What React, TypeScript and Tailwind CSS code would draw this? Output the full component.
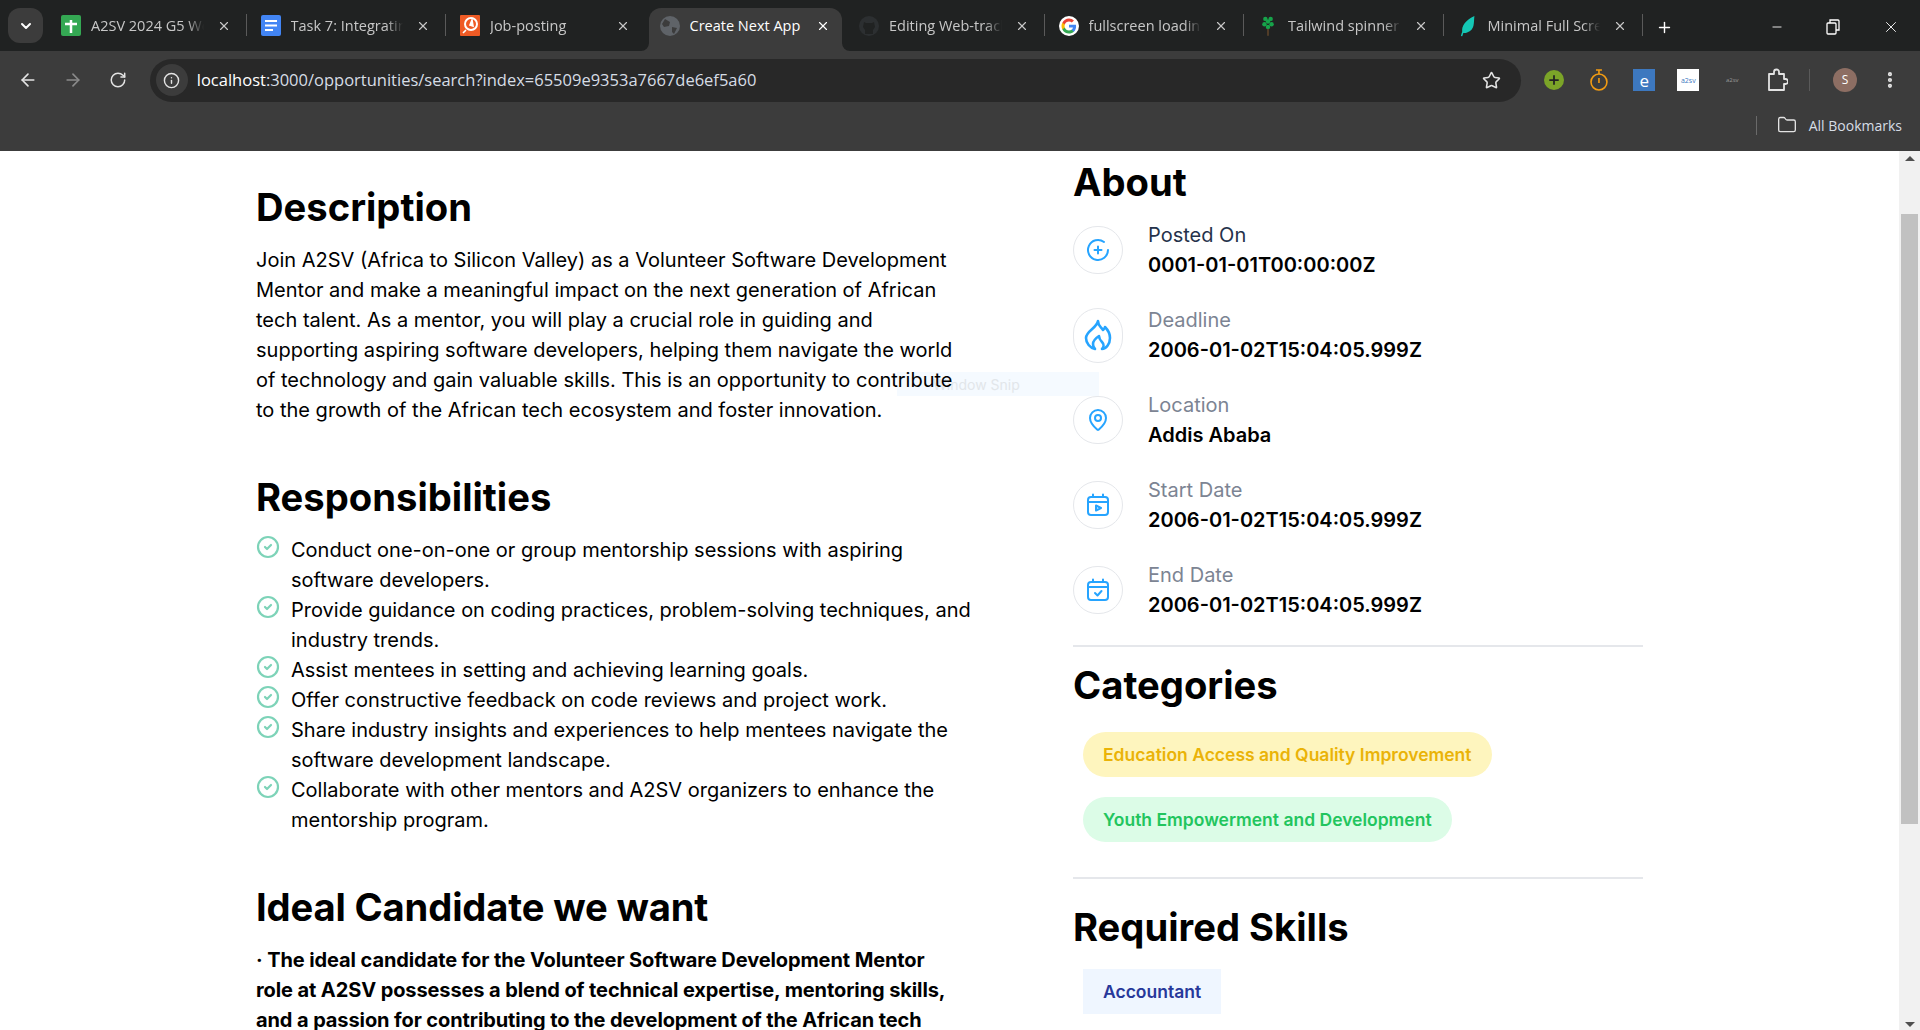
import { ArrowLeft, ArrowRight, ChevronDown, Ellipsis, Folder, Info, MapPin, Minus, Plus, RotateCw, Star, X, CheckCircle2 } from "lucide-react";
import type { ReactNode } from "react";

const SheetsIcon = () => (
  <svg width="20" height="21" viewBox="0 0 20 21"><rect width="20" height="21" rx="2" fill="#34a853" /><path d="M10 5v13M4 9h12" stroke="#fff" strokeWidth="2.5" /></svg>
);
const DocsIcon = () => (
  <svg width="20" height="21" viewBox="0 0 20 21"><rect width="20" height="21" rx="2" fill="#4285f4" /><path d="M4 6h12M4 10.500h12M4 15h8" stroke="#fff" strokeWidth="2.2" /></svg>
);
const PostmanIcon = () => (
  <svg width="20" height="21" viewBox="0 0 20 21"><rect width="20" height="21" rx="1" fill="#ef5b25" /><circle cx="11" cy="9" r="6" fill="none" stroke="#fff" strokeWidth="2" /><path d="M12 5l-2 5 3 1zM3 18l3-3" stroke="#fff" strokeWidth="1.6" fill="#fff" /></svg>
);
const GlobeIcon = () => (
  <svg width="20" height="20" viewBox="0 0 20 20"><circle cx="10" cy="10" r="10" fill="#5f6368" /><path d="M5 3l5 3-1 4-5 1-2-3zM12 11l5 1-3 6-2-2z" fill="#3c3c3c" /></svg>
);
const GithubIcon = () => (
  <svg width="20" height="20" viewBox="0 0 20 20"><circle cx="10" cy="10" r="10" fill="#2c2f31" /><path d="M6 18v-4l-2-3 1-5 2 1h6l2-1 1 5-2 3v4z" fill="#202222" /></svg>
);
const GoogleIcon = () => (
  <svg width="20" height="20" viewBox="0 0 48 48">
    <circle cx="24" cy="24" r="24" fill="#fff" />
    <path fill="#4285f4" d="M41 24.500c0-1.300-.1-2.500-.3-3.700H24v7h9.600c-.4 2.200-1.700 4.100-3.500 5.300v4.500h5.700C39.100 34.500 41 30 41 24.500z" />
    <path fill="#34a853" d="M24 42c4.800 0 8.800-1.600 11.800-4.300l-5.700-4.500c-1.600 1.100-3.600 1.700-6.100 1.700-4.700 0-8.600-3.100-10-7.400H8.100v4.600C11 37.900 17 42 24 42z" />
    <path fill="#fbbc05" d="M14 27.500c-.4-1.100-.6-2.300-.6-3.500s.2-2.400.6-3.500v-4.600H8.100C6.800 18.300 6 21 6 24s.8 5.700 2.100 8.100z" />
    <path fill="#ea4335" d="M24 13.100c2.600 0 5 .9 6.800 2.700l5.100-5.100C32.800 7.800 28.800 6 24 6 17 6 11 10.100 8.100 15.900l5.900 4.600c1.400-4.300 5.300-7.400 10-7.400z" />
  </svg>
);
const TreeIcon = () => (
  <svg width="16" height="22" viewBox="0 0 18 24"><path d="M9 12v11" stroke="#6b4a2b" strokeWidth="1.5" /><g fill="#16a34a"><circle cx="6" cy="4" r="2.500" /><circle cx="12" cy="4" r="2.500" /><circle cx="5" cy="10" r="2.500" /><circle cx="13" cy="10" r="2.500" /><circle cx="9" cy="7" r="2.500" /><circle cx="9" cy="13" r="2.500" /></g></svg>
);
const LeafIcon = () => (
  <svg width="18" height="22" viewBox="0 0 18 24"><path d="M16 1C15 8 17 16 8 19c-2 1-4 1-5 0C1 12 7 5 16 1z" fill="#14c7b5" /><path d="M2 23c1-5 4-9 8-12" stroke="#14c7b5" strokeWidth="1.500" fill="none" /></svg>
);

const tabs: { title: string; icon: ReactNode; active?: boolean }[] = [
  { title: "A2SV 2024 G5 Weekly", icon: <SheetsIcon /> },
  { title: "Task 7: Integrating", icon: <DocsIcon /> },
  { title: "Job-posting", icon: <PostmanIcon /> },
  { title: "Create Next App", icon: <GlobeIcon />, active: true },
  { title: "Editing Web-track", icon: <GithubIcon /> },
  { title: "fullscreen loading", icon: <GoogleIcon /> },
  { title: "Tailwind spinner", icon: <TreeIcon /> },
  { title: "Minimal Full Screen", icon: <LeafIcon /> },
];

const PostedIcon = () => (
  <svg width="24" height="24" viewBox="0 0 24 24" fill="none" stroke="#26a4ff" strokeWidth="2" strokeLinecap="round">
    <path d="M22 12a10 10 0 1 1-4-8" />
    <path d="M12 8.500v7M8.500 12h7" />
  </svg>
);
const FlameIcon = () => (
  <svg width="28" height="32" viewBox="0 0 28 32" fill="none" stroke="#26a4ff" strokeWidth="2.600" strokeLinecap="round" strokeLinejoin="round">
    <path d="M14 2c0 5 3 6 5 9 1-1 2-2 2-3 3 3 5 7 5 11 0 6-4 11-8 11 2-2 2-5 0-7-1-1-3-3-3-6-3 2-6 5-6 8 0 2 1 4 2 5-5-1-9-6-9-11 0-7 11-10 12-17z" />
  </svg>
);
const StartIcon = () => (
  <svg width="24" height="24" viewBox="0 0 24 24" fill="none" stroke="#26a4ff" strokeWidth="2" strokeLinecap="round" strokeLinejoin="round">
    <rect x="2" y="4" width="20" height="18" rx="3" />
    <path d="M2 9h20M7 1.500V4M17 1.500V4" />
    <path d="M10 12.500l5 2.500-5 2.500z" />
  </svg>
);
const EndIcon = () => (
  <svg width="24" height="24" viewBox="0 0 24 24" fill="none" stroke="#26a4ff" strokeWidth="2" strokeLinecap="round" strokeLinejoin="round">
    <rect x="2" y="4" width="20" height="18" rx="3" />
    <path d="M2 9h20M7 1.500V4M17 1.500V4" />
    <path d="M9 15l2.500 2.500L15.500 13" />
  </svg>
);
const ExtensionsIcon = () => (
  <svg width="22" height="24" viewBox="0 0 22 24" fill="none" stroke="#e3e3e3" strokeWidth="1.800" strokeLinejoin="round">
    <path d="M3 6h5V4a2.500 2.500 0 0 1 5 0v2h5v5h1.500a2.500 2.500 0 0 1 0 5H18v6H3z" />
  </svg>
);

const aboutRows: { label: string; value: string; icon: ReactNode; circle: string; labelColor: string }[] = [
  { label: "Posted On", value: "0001-01-01T00:00:00Z", icon: <PostedIcon />, circle: "h-12", labelColor: "text-[#25324b]" },
  { label: "Deadline", value: "2006-01-02T15:04:05.999Z", icon: <FlameIcon />, circle: "h-[55px]", labelColor: "text-[#7c8493]" },
  { label: "Location", value: "Addis Ababa", icon: <MapPin size={24} color="#26a4ff" strokeWidth={2} />, circle: "h-12", labelColor: "text-[#7c8493]" },
  { label: "Start Date", value: "2006-01-02T15:04:05.999Z", icon: <StartIcon />, circle: "h-12", labelColor: "text-[#7c8493]" },
  { label: "End Date", value: "2006-01-02T15:04:05.999Z", icon: <EndIcon />, circle: "h-12", labelColor: "text-[#7c8493]" },
];

const responsibilities = [
  "Conduct one-on-one or group mentorship sessions with aspiring software developers.",
  "Provide guidance on coding practices, problem-solving techniques, and industry trends.",
  "Assist mentees in setting and achieving learning goals.",
  "Offer constructive feedback on code reviews and project work.",
  "Share industry insights and experiences to help mentees navigate the software development landscape.",
  "Collaborate with other mentors and A2SV organizers to enhance the mentorship program.",
];

function BrowserChrome() {
  return (
    <div className="h-[151px] shrink-0 bg-[#3c3c3c] font-['Open_Sans',sans-serif] text-[#c7c7c7]">
      <div className="flex h-[51px] items-end bg-[#202222] pl-2">
        <div className="mb-2 flex h-[35px] w-[35px] items-center justify-center rounded-xl bg-[#3c3c3c] text-white">
          <ChevronDown size={16} strokeWidth={3} />
        </div>
        <div className="ml-[4px] flex">
          {tabs.map((tab, i) => (
            <div key={tab.title} className={`relative flex h-[43px] items-center pb-2 ${tab.active ? "mx-[3px] w-[193.500px] rounded-t-xl bg-[#3c3c3c] pl-[9px] pr-3 text-white" : "w-[199.500px] pl-3 pr-4"}`}>
              <div className="flex w-6 shrink-0 justify-center">{tab.icon}</div>
              <span className={`ml-[8px] flex-1 overflow-hidden whitespace-nowrap text-[14.500px] ${tab.active ? "" : "[mask-image:linear-gradient(to_right,black_85%,transparent)]"}`}>{tab.title}</span>
              <X size={14} strokeWidth={2} className={`shrink-0 ${tab.active ? "ml-2" : "ml-[13px]"}`} />
              {i !== 2 && i !== 3 && <span className="absolute right-0 top-[6px] h-[22px] w-px bg-[#5a5a5a]" />}
              {tab.active && (
                <>
                  <svg className="absolute bottom-0 -left-2" width="8" height="8" viewBox="0 0 8 8"><path d="M8 0v8H0a8 8 0 0 0 8-8z" fill="#3c3c3c" /></svg>
                  <svg className="absolute bottom-0 -right-2" width="8" height="8" viewBox="0 0 8 8"><path d="M0 0v8h8a8 8 0 0 1-8-8z" fill="#3c3c3c" /></svg>
                </>
              )}
            </div>
          ))}
        </div>
        <Plus size={17} strokeWidth={2} className="mb-[15px] ml-[13px] text-white" />
        <div className="mb-[15px] ml-auto flex items-center gap-[42px] pr-[20px] text-white">
          <Minus size={14} strokeWidth={1.500} />
          <svg width="14" height="16" viewBox="0 0 14 16" fill="none" stroke="currentColor" strokeWidth="1.300"><rect x="1" y="4" width="9" height="11" rx="1" /><path d="M4 4V1h8a1 1 0 0 1 1 1v9h-3" /></svg>
          <X size={18} strokeWidth={1.200} />
        </div>
      </div>
      <div className="flex h-[58px] items-center pl-[18px] pr-[20px]">
        <ArrowLeft size={20} strokeWidth={2} className="text-[#e3e3e3]" />
        <ArrowRight size={20} strokeWidth={2} className="ml-[25px] text-[#8a8a8a]" />
        <RotateCw size={18} strokeWidth={2} className="ml-[26px] text-[#e3e3e3]" />
        <div className="ml-[23px] flex h-[43px] w-[1376px] items-center rounded-full bg-[#282828] pl-[6px] pr-5">
          <div className="flex h-8 w-8 items-center justify-center rounded-full bg-[#3c3c3c]"><Info size={17} className="text-[#e3e3e3]" /></div>
          <span className="ml-[9px] flex-1 text-[16.500px] text-[#d6dde5]"><span className="text-white">localhost</span>:3000/opportunities/search?index=65509e9353a7667de6ef5a60</span>
          <Star size={19} className="text-[#e3e3e3]" />
        </div>
        <div className="ml-[23px] flex h-5 w-5 items-center justify-center rounded-full bg-[#7ba428] text-[#222]"><Plus size={14} strokeWidth={3} /></div>
        <svg className="ml-[25px]" width="20" height="24" viewBox="0 0 20 24" fill="none" stroke="#f39c12" strokeWidth="1.600"><circle cx="10" cy="14" r="8" /><path d="M7 2h6M10 2v4M10 10v5" /></svg>
        <div className="ml-[25px] flex h-[22px] w-[22px] items-center justify-center bg-[#3d78bf] text-[17px] leading-none text-white">e</div>
        <div className="ml-[22px] flex h-[22px] w-[22px] items-center justify-center bg-white text-[7px] leading-none text-[#3d78bf]">a2sv</div>
        <div className="ml-[22px] w-[22px] text-center text-[6px] leading-none text-[#9a9a9a]">a2sv</div>
        <div className="ml-[23px]"><ExtensionsIcon /></div>
        <span className="ml-[21px] h-[22px] w-px bg-[#5a5a5a]" />
        <div className="ml-[23px] flex h-6 w-6 items-center justify-center rounded-full bg-[#8d6e63] text-[12px] text-white">S</div>
        <Ellipsis size={20} strokeWidth={3} className="ml-[23px] rotate-90 text-[#e3e3e3]" />
      </div>
      <div className="flex h-[42px] items-center justify-end pb-[10px] pr-[18px]">
        <span className="h-[19px] w-px bg-[#6a6a6a]" />
        <Folder size={20} strokeWidth={1.600} className="ml-[20px] text-[#e3e3e3]" />
        <span className="ml-[12px] text-[14px] text-[#d6dde5]">All Bookmarks</span>
      </div>
    </div>
  );
}

function Scrollbar() {
  return (
    <div className="flex w-[21px] shrink-0 flex-col items-center justify-between bg-[#f1f1f1] pb-[3px] pt-[5px]">
      <div className="relative flex w-full flex-1 flex-col items-center">
        <div className="h-0 w-0 border-x-[5px] border-b-[5px] border-x-transparent border-b-[#505050]" />
        <div className="mt-[53px] h-[610px] w-[17px] bg-[#c1c1c1]" />
      </div>
      <div className="h-0 w-0 border-x-[5px] border-t-[5px] border-x-transparent border-t-[#505050]" />
    </div>
  );
}

export default function App() {
  return (
    <div className="flex h-[1030px] flex-col overflow-hidden bg-white font-['Inter',sans-serif] text-black">
      <BrowserChrome />
      <div className="relative flex min-h-0 flex-1">
        <div className="absolute left-[897px] top-[221px] flex h-6 w-[202px] items-center bg-[#f5faff] pl-9 text-[14px] text-[#e2e6ea]">Window Snip</div>
        <main className="relative flex min-w-0 flex-1 overflow-hidden pl-[256px]">
          <div className="w-[720px] shrink-0 pt-[36px] text-[20px] leading-[30px]">
            <h2 className="text-[38.200px] font-bold leading-10">Description</h2>
            <p className="mt-[18px]">
              Join A2SV (Africa to Silicon Valley) as a Volunteer Software Development Mentor and make a meaningful impact on the next generation of African tech talent. As a mentor, you will play a crucial role in guiding and supporting aspiring software developers, helping them navigate the world of technology and gain valuable skills. This is an opportunity to contribute to the growth of the African tech ecosystem and foster innovation.
            </p>
            <h2 className="mt-[52px] text-[38.200px] font-bold leading-10">Responsibilities</h2>
            <ul className="mt-[18px]">
              {responsibilities.map((item) => (
                <li key={item} className="flex">
                  <CheckCircle2 size={24} color="#7dd3b8" strokeWidth={2.200} className="mr-[11px] shrink-0" />
                  <span>{item}</span>
                </li>
              ))}
            </ul>
            <h2 className="mt-[52px] text-[38.200px] font-bold leading-10 tracking-[-0.16px]">Ideal Candidate we want</h2>
            <p className="mt-[18px] max-w-[700px] font-bold tracking-[-0.1px]">
              · The ideal candidate for the Volunteer Software Development Mentor role at A2SV possesses a blend of technical expertise, mentoring skills, and a passion for contributing to the development of the African tech
            </p>
          </div>
          <aside className="ml-[97px] w-[570px] shrink-0 pt-[11px] text-[20px] leading-[30px]">
            <h2 className="text-[38.200px] font-bold leading-10">About</h2>
            <div className="mt-[18px] flex flex-col gap-[25px]">
              {aboutRows.map((row) => (
                <div key={row.label} className="flex items-center">
                  <div className={`flex w-[50px] shrink-0 items-center justify-center rounded-full border border-[#e5e7eb] ${row.circle}`}>{row.icon}</div>
                  <div className="ml-[25px]">
                    <div className={row.labelColor}>{row.label}</div>
                    <div className="font-semibold">{row.value}</div>
                  </div>
                </div>
              ))}
            </div>
            <hr className="mt-[25px] border-t-2 border-[#e5e7eb]" />
            <h2 className="mt-[18px] text-[38.200px] font-bold leading-10">Categories</h2>
            <div className="mt-[18px] flex flex-col items-start gap-5 pl-[10px] pt-[9px]">
              <span className="rounded-full bg-[#fef5be] px-5 py-[9px] text-[17.500px] font-semibold leading-[27px] text-[#eab308]">Education Access and Quality Improvement</span>
              <span className="rounded-full bg-[#dcfce7] px-5 py-[9px] text-[17.500px] font-semibold leading-[27px] text-[#22c55e]">Youth Empowerment and Development</span>
            </div>
            <hr className="mt-[35px] border-t-2 border-[#e5e7eb]" />
            <h2 className="mt-[28px] text-[38.200px] font-bold leading-10">Required Skills</h2>
            <div className="mt-[22px] pl-[10px]">
              <span className="inline-block bg-[#eff6ff] px-5 py-[9px] text-[17.500px] font-semibold leading-[27px] text-[#27389a]">Accountant</span>
            </div>
          </aside>
        </main>
        <Scrollbar />
      </div>
    </div>
  );
}
